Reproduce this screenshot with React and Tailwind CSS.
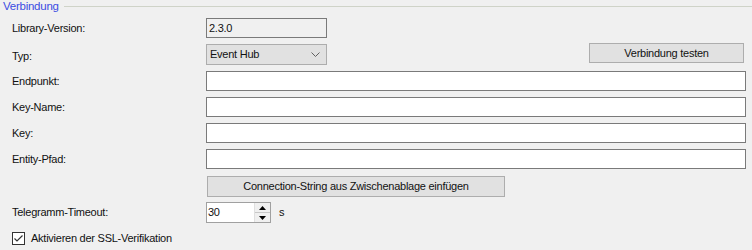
import React from "react";

function Label({ children }) {
  return <div className="w-[206px] shrink-0 pl-[12px]">{children}</div>;
}

function TextRow({ label, mt }) {
  return (
    <div className={`flex items-center h-[20px] ${mt}`}>
      <Label>{label}</Label>
      <div className="w-[540px] h-[20px] bg-white border border-[#7a7a7a]" />
    </div>
  );
}

export default function App() {
  return (
    <div
      className="w-[752px] h-[250px] bg-[#f0f0f0] text-[11px] tracking-[-0.25px] text-[#111] overflow-hidden"
      style={{ fontFamily: '"Liberation Sans", Arial, sans-serif' }}
    >
      {/* group header */}
      <div className="flex items-center h-[14px]">
        <span className="pl-[3px] text-[#3b4ce2] leading-none text-[11.5px]">Verbindung</span>
        <div className="flex-1 ml-[5px] h-[2px] border-t border-[#cfd3c8] border-b-white" />
      </div>

      <div className="flex items-center h-[20px] mt-[4px]">
        <Label>Library-Version:</Label>
        <div className="w-[121px] h-[20px] border border-[#7a7a7a] bg-[#f0f0f0] flex items-center pl-[2px]">
          2.3.0
        </div>
      </div>

      <div className="flex items-start h-[22px] mt-[5px]">
        <Label>
          <div className="mt-[5px]">Typ:</div>
        </Label>
        <div className="mt-[1px] w-[121px] h-[21px] border border-[#adadad] bg-[#e1e1e1] flex items-center justify-between pl-[3px] pr-[6px]">
          <span>Event Hub</span>
          <svg width="9" height="5" viewBox="0 0 9 5">
            <path d="M0.5 0.5 L4.5 4.5 L8.5 0.5" fill="none" stroke="#606060" strokeWidth="1" />
          </svg>
        </div>
        <div className="ml-auto mr-[8px] w-[155px] h-[20px] border border-[#adadad] bg-[#e1e1e1] flex items-center justify-center">
          Verbindung testen
        </div>
      </div>

      <TextRow label="Endpunkt:" mt="mt-[6px]" />
      <TextRow label="Key-Name:" mt="mt-[6px]" />
      <TextRow label="Key:" mt="mt-[6px]" />
      <TextRow label="Entity-Pfad:" mt="mt-[6px]" />

      <div className="flex h-[21px] mt-[7px]">
        <div className="w-[207px] shrink-0" />
        <div className="w-[298px] h-[21px] border border-[#adadad] bg-[#e1e1e1] flex items-center justify-center">
          Connection-String aus Zwischenablage einfügen
        </div>
      </div>

      <div className="flex items-center h-[21px] mt-[5px]">
        <Label>Telegramm-Timeout:</Label>
        <div className="w-[65px] h-[21px] border border-[#a0a0a0] bg-white flex">
          <div className="flex-1 flex items-center pl-[1px]">30</div>
          <div className="w-[16px] flex flex-col border-l border-[#e0e0e0]">
            <div className="flex-1 bg-[#f0f0f0] border-b border-[#c8c8c8] flex items-center justify-center">
              <svg width="7" height="4" viewBox="0 0 7 4">
                <path d="M3.5 0 L7 4 L0 4 Z" fill="#000" />
              </svg>
            </div>
            <div className="flex-1 bg-[#f0f0f0] flex items-center justify-center">
              <svg width="7" height="4" viewBox="0 0 7 4">
                <path d="M0 0 L7 0 L3.5 4 Z" fill="#000" />
              </svg>
            </div>
          </div>
        </div>
        <span className="ml-[8px]">s</span>
      </div>

      <div className="flex items-center h-[14px] mt-[8px] pl-[12px]">
        <div className="w-[13px] h-[13px] border border-[#333] bg-white flex items-center justify-center">
          <svg width="11" height="11" viewBox="0 0 11 11">
            <path d="M1.5 5.5 L4 8 L9.5 2.5" fill="none" stroke="#333" strokeWidth="1.2" />
          </svg>
        </div>
        <span className="ml-[6px]">Aktivieren der SSL-Verifikation</span>
      </div>
    </div>
  );
}
